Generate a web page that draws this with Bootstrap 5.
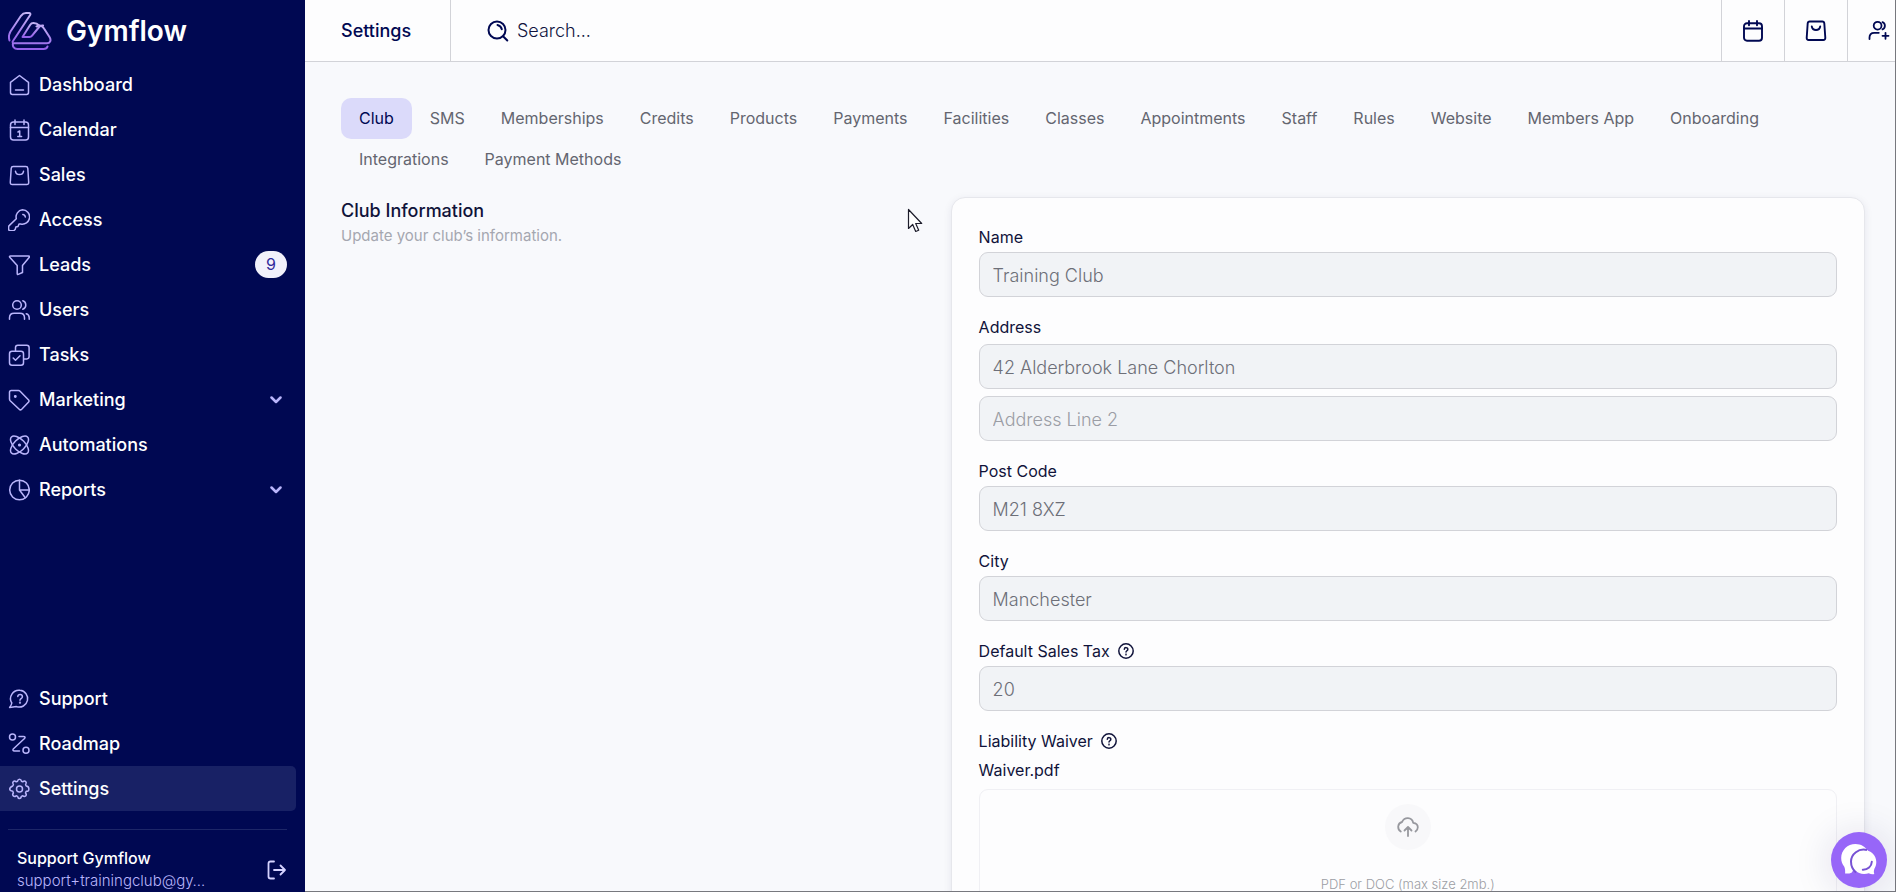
<!DOCTYPE html>
<html lang="en">
<head>
<meta charset="utf-8">
<meta name="viewport" content="width=device-width, initial-scale=1">
<title>Settings · Gymflow</title>
<link href="https://cdn.jsdelivr.net/npm/bootstrap@5.3.0/dist/css/bootstrap.min.css" rel="stylesheet">
<style>
  :root { --navy: #000852; --ink: #10133a; --lilac: #b9b5fb; --rule: #d2d3d8; --paper: #fdfdfe; }
  body { font-family: Inter, "Noto Sans", sans-serif; font-size: 16px; line-height: 24px; color: var(--ink); background: #f8f9fc; }
  svg { display: block; fill: none; stroke: currentColor; stroke-width: 1.5; stroke-linecap: round; stroke-linejoin: round; flex: none; }

  .side { width: 305px; background: var(--navy); }
  .brand { height: 62px; padding: 0 8px; gap: 14px; color: #fff; font-size: 28px; font-weight: 600; line-height: 36px; }
  .side .nav-link { height: 45px; padding: 0 14px 0 8px; margin-right: 9px; gap: 9px; color: #fff; font-size: 18px; font-weight: 500; border-radius: 0 5px 5px 0; }
  .side .nav-link svg { color: var(--lilac); }
  .side .nav-link.active { background: #182165; }
  .count { width: 32px; height: 27px; margin-right: -5px; border-radius: 14px; background: #f1f1fb; color: #2f2a9c; font-size: 16px; font-weight: 400; line-height: 27px; text-align: center; }
  .side-rule { height: 1px; margin: 18px 18px 17px 8px; background: #1d2668; }
  .account { padding: 0 17px; color: #fff; }
  .account-name { font-size: 16px; line-height: 23px; font-weight: 500; }
  .account-mail { font-size: 15px; line-height: 22px; font-weight: 300; color: var(--lilac); }
  .icon-btn { border: 0; padding: 0; background: none; color: #d5d3ff; }

  .frame { border-right: 1px solid #77787e; border-bottom: 1px solid #77787e; min-width: 0; }
  .topbar { height: 62px; background: var(--paper); border-bottom: 1px solid var(--rule); color: var(--navy); }
  .page-name { width: 146px; padding-left: 36px; border-right: 1px solid var(--rule); font-size: 18px; font-weight: 500; }
  .finder { padding-left: 36px; gap: 8px; }
  .finder input { border: 0; padding: 0; outline: 0; background: none; font-size: 18px; font-weight: 300; color: var(--navy); }
  .finder input::placeholder { color: #10143f; opacity: 1; }
  .tool { width: 63px; border: 0; border-left: 1px solid var(--rule); background: none; color: var(--navy); }
  .tool:last-child { width: 48px; padding: 0 0 0 20px; }

  .content { padding: 36px 30px 0 36px; }
  .tabs { margin-bottom: 17px; }
  .tabs .nav-link { height: 41px; padding: 0 18px; line-height: 41px; font-size: 16px; font-weight: 400; color: #646670; border-radius: 10px; }
  .tabs .nav-link.active { color: var(--navy); background: #dbdafa; }
  .intro { flex: 0 0 40%; }
  .intro h2 { margin: 2px 0 1px; font-size: 18px; line-height: 24px; font-weight: 500; }
  .intro p { margin: 0; font-size: 15px; color: #a5a7b0; }
  .panel { flex: 1; padding: 27px; background: var(--paper); border: 1px solid #e6e7ec; border-radius: 14px; box-shadow: 0 2px 8px rgba(20,20,80,.08); }
  .field { margin-bottom: 18px; }
  .field label { height: 24px; margin-bottom: 3px; gap: 8px; font-size: 16px; font-weight: 400; }
  .field.address label { margin-bottom: 5px; }
  .field .form-control { height: 45px; padding: 2px 13px 0; background: #f1f3f6; border: 1px solid var(--rule); border-radius: 9px; font-size: 18px; font-weight: 300; color: #6d6f78; }
  .field .form-control + .form-control { margin-top: 7px; }
  .field .form-control::placeholder { color: #9b9da5; opacity: 1; }
  .file-name { display: block; margin: 5px 0 7px; font-size: 16px; font-weight: 400; color: var(--ink); text-decoration: none; }
  .drop { height: 140px; padding-top: 14px; border: 1px solid #f0f0f4; border-radius: 9px; }
  .drop-icon { width: 46px; height: 46px; margin-bottom: 22px; border-radius: 50%; background: #f8f8fa; color: #97989e; }
  .drop-note { font-size: 13px; font-weight: 300; color: #9c9da4; }

  .chat { right: 9px; bottom: 4px; width: 56px; height: 56px; border: 0; border-radius: 50%; background: #9766f8; box-shadow: 0 2px 40px rgba(30,20,90,.14); }
  .pointer { left: 907px; top: 208px; z-index: 5; }
</style>
</head>
<body class="vh-100 overflow-hidden d-flex">

<aside class="side vh-100 d-flex flex-column flex-shrink-0 overflow-hidden">
  <a href="#" class="brand d-flex align-items-center text-decoration-none flex-shrink-0">
    <svg width="44" height="38" viewBox="0 0 44 38">
      <defs><linearGradient id="glow" x1="0" y1="0" x2="0" y2="1"><stop offset="0" stop-color="#c4b4f5"/><stop offset="1" stop-color="#9560ea"/></linearGradient></defs>
      <g stroke="url(#glow)" stroke-width="2">
        <path d="M1.500 28.500C.5 25.500.8 22.500 2.500 19.500L13 3.800C14.500 1.800 16 1 18 1h3c1.300 0 1.800 1 1 2.200L7 26C6 27.500 5 28.500 4.500 30"/>
        <path d="M28.500 14.500c3.500-2.700 6.500.2 7.500 2l5.500 8.500c2.300 3.800.2 6.300-2.500 6.300H5c-.8 3.200 1.200 5.700 4.500 5.700h26c2 0 3.500-.8 4-2.500"/>
        <path d="M31 13.500c-1.500-1.800-3.500-2.500-5.500-2.500-1.500 0-2.600.6-3.400 1.900L14.500 25h7c1.200 0 1.900-.4 2.600-1.300l7-8.700c1.200-1.500 2.600-1.800 4-1.500"/>
      </g>
    </svg>
    <span>Gymflow</span>
  </a>
  <nav class="nav flex-column flex-nowrap">
    <a class="nav-link d-flex align-items-center" href="#"><svg width="22" height="22" viewBox="0 0 22 22"><path d="M2.500 8.300 11.500 1.500l9 6.800v10.200q0 1.900-1.900 1.900H4.400q-1.900 0-1.900-1.900zM7.500 16h8"/></svg><span>Dashboard</span></a>
    <a class="nav-link d-flex align-items-center" href="#"><svg width="22" height="22" viewBox="0 0 22 22"><rect x="2.500" y="3" width="18" height="18" rx="3"/><path d="M2.500 8.500h18M7 1v4.500M16 1v4.500M10 13l1.700-1v5.500M9.800 17.500h3.800"/></svg><span>Calendar</span></a>
    <a class="nav-link d-flex align-items-center" href="#"><svg width="22" height="22" viewBox="0 0 22 22"><path d="M5.200 2.500h12.600q1.800 0 2 1.800l.9 14q.1 2.200-2 2.200H4.300q-2.100 0-2-2.200l.9-14q.2-1.800 2-1.800zM7.500 7.300c.8 4.300 7.200 4.300 8 0"/></svg><span>Sales</span></a>
    <a class="nav-link d-flex align-items-center" href="#"><svg width="22" height="22" viewBox="0 0 22 22"><path d="M14.500.800a7.200 7.200 0 1 1-1.800 14.200l-1.700 0-1 2.500-2.200.5-.5 2.200-1.500 1.600H2.500q-1.900 0-1.900-1.900v-1.800q0-1 .8-1.700l6.900-6.700A7.200 7.200 0 0 1 14.500.800zM14.800 5.500q2.200.2 2.500 2.500"/></svg><span>Access</span></a>
    <a class="nav-link d-flex align-items-center" href="#"><svg width="22" height="22" viewBox="0 0 22 22"><path d="M2.500 2h18q1.400 0 .8 1.300L14.500 11.500v7l-4.300 1.900q-1 .3-1-.9v-8L1.700 3.300Q1.100 2 2.500 2z"/></svg><span>Leads</span><span class="count ms-auto">9</span></a>
    <a class="nav-link d-flex align-items-center" href="#"><svg width="22" height="22" viewBox="0 0 22 22"><circle cx="9" cy="6" r="4.300"/><path d="M1.500 20.300v-1.500q0-4.600 4.600-4.600h5.800q4.600 0 4.600 4.600v1.500M14.800 1.800q3 1 3 4.200t-3 4.300M18.200 14.700q3 .7 3 4.100v1.500"/></svg><span>Users</span></a>
    <a class="nav-link d-flex align-items-center" href="#"><svg width="22" height="22" viewBox="0 0 22 22"><rect x="1.500" y="7.200" width="14" height="14" rx="2.500"/><path d="M7.500 7V3.600q0-2.300 2.300-2.300h9q2.300 0 2.300 2.300v9q0 2.300-2.300 2.300h-3M5.200 14l2.300 2.300 4.500-4.500"/></svg><span>Tasks</span></a>
    <a class="nav-link d-flex align-items-center" href="#"><svg width="22" height="22" viewBox="0 0 22 22"><path d="M3.200 1.500h7.300q.9 0 1.600.7l8.300 8.600q1.200 1.200 0 2.500l-6.700 7q-1.300 1.200-2.500 0l-9-8.600q-.7-.7-.7-1.600V3.200q0-1.700 1.700-1.700z"/><circle cx="7.300" cy="7.500" r=".7" fill="currentColor"/></svg><span>Marketing</span><svg class="ms-auto" width="12" height="8" viewBox="0 0 12 8"><path stroke-width="2.500" d="m1.500 1.500 4.500 4.500 4.500-4.500"/></svg></a>
    <a class="nav-link d-flex align-items-center" href="#"><svg width="22" height="22" viewBox="0 0 22 22"><ellipse cx="11.500" cy="11" rx="11.400" ry="5.600" transform="rotate(45 11.500 11)"/><ellipse cx="11.500" cy="11" rx="11.400" ry="5.600" transform="rotate(-45 11.500 11)"/><circle cx="11.500" cy="11" r=".8" fill="currentColor"/></svg><span>Automations</span></a>
    <a class="nav-link d-flex align-items-center" href="#"><svg width="22" height="22" viewBox="0 0 22 22"><circle cx="11.500" cy="11" r="9.800"/><path d="M11.500 1.200V11h9.800M11.500 11l5.800 7.800"/></svg><span>Reports</span><svg class="ms-auto" width="12" height="8" viewBox="0 0 12 8"><path stroke-width="2.500" d="m1.500 1.500 4.500 4.500 4.500-4.500"/></svg></a>
  </nav>
  <nav class="nav flex-column flex-nowrap mt-auto">
    <a class="nav-link d-flex align-items-center" href="#"><svg width="22" height="22" viewBox="0 0 22 22"><path d="M12 2.300a8.400 8.400 0 1 1-3.500 16.300L1.600 19.500q1.900-2.300 2.200-4.500A8.400 8.400 0 0 1 12 2.300zM9.800 8.500c.2-2.600 4.600-2.600 4.600.2 0 1.900-2.400 1.900-2.400 3.500"/><circle cx="12" cy="14.700" r=".4" fill="currentColor"/></svg><span>Support</span></a>
    <a class="nav-link d-flex align-items-center" href="#"><svg width="22" height="22" viewBox="0 0 22 22"><circle cx="4.500" cy="4" r="3"/><circle cx="18" cy="17.300" r="3"/><path d="M11 3.500h4.500q2.500 0 1 2L5.500 15.700q-1.500 2.200 1 2.200h5"/></svg><span>Roadmap</span></a>
    <a class="nav-link active d-flex align-items-center" href="#" aria-current="page"><svg width="22" height="22" viewBox="0 0 22 22"><circle cx="11.500" cy="11" r="3"/><path d="M9.600 3.200Q9.900 1.200 11.500 1.200t1.900 2l1.400.6q1.600-1.300 2.900-.2 1.200 1.300-.1 3l.6 1.400q2.700.3 2.700 3t-2.700 2.200l-.7 1.700q1.500 1.700.2 3-1.300 1.100-2.900-.1l-1.500.6q-.2 2.100-1.800 2.100t-1.900-2.100l-1.400-.6q-1.700 1.300-2.900.1-1.300-1.300.1-3l-.6-1.700Q1.700 12.700 1.700 11t3-3l.7-1.400q-1.300-1.700-.1-3 1.300-1.100 2.900.2z"/></svg><span>Settings</span></a>
  </nav>
  <div class="side-rule flex-shrink-0"></div>
  <div class="account d-flex align-items-center justify-content-between flex-shrink-0">
    <div>
      <div class="account-name">Support Gymflow</div>
      <div class="account-mail text-nowrap">support+trainingclub@gy…</div>
    </div>
    <button class="icon-btn" type="button" aria-label="Log out"><svg width="22" height="20" viewBox="0 0 22 20"><path stroke-width="1.800" d="M8 1.500H4.500q-2 0-2 2v13q0 2 2 2H8M8 10h11M14.500 5.500 19 10l-4.500 4.500"/></svg></button>
  </div>
</aside>

<div class="frame vh-100 flex-grow-1 d-flex flex-column overflow-hidden">
  <header class="topbar d-flex align-items-stretch flex-shrink-0">
    <div class="page-name d-flex align-items-center">Settings</div>
    <div class="finder flex-grow-1 d-flex align-items-center">
      <svg width="22" height="22" viewBox="0 0 22 22"><g stroke-width="2"><circle cx="10" cy="10" r="8.500"/><path d="m16.300 16.500 4 4M10.500 5q3.500.8 4.300 4.300"/></g></svg>
      <input type="search" class="flex-grow-1" placeholder="Search..." aria-label="Search">
    </div>
    <button class="tool d-flex align-items-center justify-content-center" type="button" aria-label="Calendar"><svg width="22" height="22" viewBox="0 0 22 22"><g stroke-width="1.900"><rect x="2" y="3.200" width="18" height="17.500" rx="3"/><path d="M2 8.500h18M7 1v4.300M15 1v4.300"/></g></svg></button>
    <button class="tool d-flex align-items-center justify-content-center" type="button" aria-label="Sales"><svg width="22" height="22" viewBox="0 0 22 22"><path stroke-width="1.900" d="M4.700 1.500h12.600q1.800 0 2 1.800l1 14.500q.1 2.200-2 2.200H3.700q-2.100 0-2-2.200l1-14.500q.2-1.800 2-1.800zM6.800 6.500c.8 4.600 7.600 4.600 8.400 0"/></svg></button>
    <button class="tool d-flex align-items-center" type="button" aria-label="Add member"><svg width="22" height="22" viewBox="0 0 22 22"><path stroke-width="1.800" d="M13.500 5.700a3.900 3.900 0 1 1-7.800 0 3.900 3.900 0 0 1 7.800 0zM1.500 19v-1.500q0-4.700 4.700-4.700h4.600M14.500 2.200q2.400 1 2.400 3.600t-2.400 3.600M17.500 12.800v6M14.500 15.800h6"/></svg></button>
  </header>

  <main class="content flex-grow-1 overflow-hidden">
    <nav class="tabs nav">
      <a class="nav-link active" href="#" aria-current="page">Club</a>
      <a class="nav-link" href="#">SMS</a>
      <a class="nav-link" href="#">Memberships</a>
      <a class="nav-link" href="#">Credits</a>
      <a class="nav-link" href="#">Products</a>
      <a class="nav-link" href="#">Payments</a>
      <a class="nav-link" href="#">Facilities</a>
      <a class="nav-link" href="#">Classes</a>
      <a class="nav-link" href="#">Appointments</a>
      <a class="nav-link" href="#">Staff</a>
      <a class="nav-link" href="#">Rules</a>
      <a class="nav-link" href="#">Website</a>
      <a class="nav-link" href="#">Members App</a>
      <a class="nav-link" href="#">Onboarding</a>
      <a class="nav-link" href="#">Integrations</a>
      <a class="nav-link" href="#">Payment Methods</a>
    </nav>

    <div class="d-flex align-items-start">
      <section class="intro">
        <h2>Club Information</h2>
        <p>Update your club’s information.</p>
      </section>

      <form class="panel">
        <div class="field">
          <label class="d-flex align-items-center" for="club-name">Name</label>
          <input class="form-control" id="club-name" type="text" value="Training Club">
        </div>
        <div class="field address">
          <label class="d-flex align-items-center" for="address-1">Address</label>
          <input class="form-control" id="address-1" type="text" value="42 Alderbrook Lane Chorlton">
          <input class="form-control" id="address-2" type="text" placeholder="Address Line 2" aria-label="Address line 2">
        </div>
        <div class="field">
          <label class="d-flex align-items-center" for="post-code">Post Code</label>
          <input class="form-control" id="post-code" type="text" value="M21 8XZ">
        </div>
        <div class="field">
          <label class="d-flex align-items-center" for="city">City</label>
          <input class="form-control" id="city" type="text" value="Manchester">
        </div>
        <div class="field">
          <label class="d-flex align-items-center" for="tax">Default Sales Tax <svg width="16" height="16" viewBox="0 0 16 16"><circle cx="8" cy="8" r="7.200"/><path d="M6.300 6.300c.2-2.300 3.600-2.200 3.500.1 0 1.300-1.800 1.400-1.800 2.700"/><circle cx="8" cy="11.500" r=".3"/></svg></label>
          <input class="form-control" id="tax" type="text" value="20">
        </div>
        <div class="field">
          <label class="d-flex align-items-center" for="waiver">Liability Waiver <svg width="16" height="16" viewBox="0 0 16 16"><circle cx="8" cy="8" r="7.200"/><path d="M6.300 6.300c.2-2.300 3.600-2.200 3.500.1 0 1.300-1.800 1.400-1.800 2.700"/><circle cx="8" cy="11.500" r=".3"/></svg></label>
          <a class="file-name" href="#">Waiver.pdf</a>
          <div class="drop d-flex flex-column align-items-center">
            <span class="drop-icon d-flex align-items-center justify-content-center"><svg width="22" height="20" viewBox="0 0 22 20"><path stroke-width="1.800" d="M3.800 14.500Q1 12.800 1.200 9.500 1.700 5.700 5 5q2-4 6-3.800 4.200.3 5.200 4.600 4.600.5 4.600 4.500 0 2.500-2.300 4.200M11 19v-8.500M7.500 13.500 11 10l3.500 3.500"/></svg></span>
            <span class="drop-note">PDF or DOC (max size 2mb.)</span>
          </div>
          <input class="visually-hidden" id="waiver" type="file">
        </div>
      </form>
    </div>
  </main>
</div>

<button class="chat position-fixed d-flex align-items-center justify-content-center p-0" type="button" aria-label="Open chat">
  <svg width="38" height="34" viewBox="0 0 38 34">
    <path fill="#fff" stroke="none" d="M15.500 1C7.500 1 1.200 7.200 1.200 15c0 3.400 1.100 6.300 3.100 8.700.9 2.200 1 4.300.8 6.800 2.400.3 4.600 0 6.400-.8L28 8C25.500 3.800 21 1 15.500 1z"/>
    <path fill="#fff" stroke="none" d="M24 7c-6.700 0-12.200 5.400-12.200 12S17.300 31 24 31c1.800 0 3.300-.3 4.800-.8 1.800 1 3.700 1.300 5.500.8-.6-1.800-.6-3.600.2-5.500 1.200-1.900 1.800-4.100 1.800-6.500C36.300 12.400 30.800 7 24 7z"/>
    <path stroke="#7752d4" stroke-width="2" stroke-linecap="butt" d="M27 7c-8.500-2-15.800 4-16 11.500 0 4.500 1.800 8.300 5 11"/>
    <path stroke="#7752d4" stroke-width="2" d="M31.800 18.800c-.2 4.700-4 8-9 7.900"/>
  </svg>
</button>

<svg class="pointer position-absolute" width="17" height="26" viewBox="0 0 17 26"><path fill="#fff" stroke="#1d1d2b" stroke-width="1.200" d="M1.500 1.500v19l4.200-4 3 7 3-1.300-3-6.700h6z"/></svg>

<script src="https://cdn.jsdelivr.net/npm/bootstrap@5.3.0/dist/js/bootstrap.bundle.min.js"></script>
</body>
</html>
